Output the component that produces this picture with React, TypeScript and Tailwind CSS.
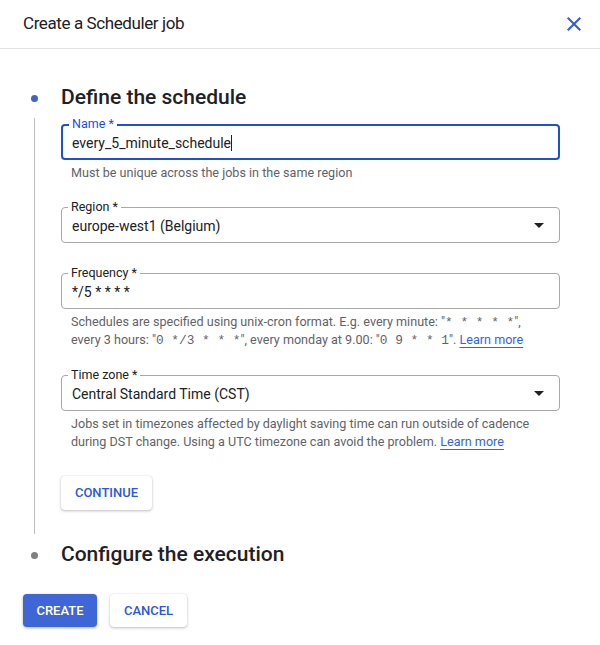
import type { ReactNode } from "react";

const font = { fontFamily: "Roboto, 'Liberation Sans', sans-serif" };

const Arrow = () => (
  <svg width="10" height="5" viewBox="0 0 10 5" className="shrink-0">
    <path d="M0 0h10L5 5z" fill="#202124" />
  </svg>
);

type FieldProps = {
  label: string;
  value: ReactNode;
  focused?: boolean;
  select?: boolean;
  helper?: ReactNode;
};

const Field = ({ label, value, focused, select, helper }: FieldProps) => (
  <div>
    <div
      className={
        focused
          ? "relative h-[36px] rounded-[4px] border-2 border-[#1f4fd6] flex items-center pl-[9px] pr-[14px]"
          : "relative h-[36px] rounded-[4px] border border-[#a8a8a8] flex items-center pl-[10px] pr-[15px]"
      }
    >
      <span
        className={
          focused
            ? "absolute -top-[9px] left-[6px] bg-white px-[3px] text-[12.5px] leading-[14px] text-[#1f4fd6]"
            : "absolute -top-[8px] left-[6px] bg-white px-[3px] text-[12.5px] leading-[14px] text-[#202124]"
        }
      >
        {label}
      </span>
      <div className="flex-1 pt-[3px] text-[14px] text-[#202124]">{value}</div>
      {select && <Arrow />}
    </div>
    {helper && (
      <div className="pl-[10px] pt-[4px] text-[12.6px] leading-[18px] text-[#5f6368]">{helper}</div>
    )}
  </div>
);

const Mono = ({ children }: { children: ReactNode }) => (
  <span className="text-[12.8px] leading-[1]" style={{ fontFamily: "'Liberation Mono', monospace" }}>
    {children}
  </span>
);

const LearnMore = () => (
  <span className="text-[#3367d6] underline decoration-[#3367d6] underline-offset-[3px]">Learn more</span>
);

export default function App() {
  return (
    <div className="w-[600px] h-[645px] bg-white" style={font}>
      <header className="h-[49px] border-b border-[#e3e3e3] flex items-center justify-between pl-[23px] pr-[14px]">
        <h1 className="text-[17px] tracking-[-0.4px] text-[#202124]">Create a Scheduler job</h1>
        <svg width="24" height="24" viewBox="0 0 24 24">
          <path
            d="M19 6.41L17.59 5 12 10.59 6.41 5 5 6.41 10.59 12 5 17.59 6.41 19 12 13.41 17.59 19 19 17.59 13.41 12z"
            fill="#2f5bd8"
          />
        </svg>
      </header>

      <section className="pt-[35px]">
        <div className="flex items-center h-[28px]">
          <div className="w-[61px] pl-[31px]">
            <div className="w-[7px] h-[7px] rounded-full bg-[#3b63d6]" />
          </div>
          <h2 className="text-[21px] font-medium text-[#202124]">Define the schedule</h2>
        </div>

        <div className="flex mt-[6px]">
          <div className="w-[61px] pl-[34px] shrink-0">
            <div className="w-px h-[416px] bg-[#bdbdbd]" />
          </div>
          <div className="w-[499px] pt-[6px]">
            <Field
              label="Name *"
              focused
              value={
                <span>
                  every_5_minute_schedule<span className="inline-block w-px h-[16px] bg-[#202124] align-[-3px]" />
                </span>
              }
              helper="Must be unique across the jobs in the same region"
            />
            <div className="mt-[25px]">
              <Field label="Region *" value="europe-west1 (Belgium)" select />
            </div>
            <div className="mt-[30px]">
              <Field
                label="Frequency *"
                value="*/5 * * * *"
                helper={
                  <>
                    Schedules are specified using unix-cron format. E.g. every minute: "<Mono>* * * * *</Mono>",
                    <br />
                    every 3 hours: "<Mono>0 */3 * * *</Mono>", every monday at 9.00: "<Mono>0 9 * * 1</Mono>".{" "}
                    <LearnMore />
                  </>
                }
              />
            </div>
            <div className="mt-[26px]">
              <Field
                label="Time zone *"
                value="Central Standard Time (CST)"
                select
                helper={
                  <>
                    Jobs set in timezones affected by daylight saving time can run outside of cadence
                    <br />
                    during DST change. Using a UTC timezone can avoid the problem. <LearnMore />
                  </>
                }
              />
            </div>
            <button className="mt-[25px] h-[34px] w-[91px] rounded-[4px] bg-white text-[13px] font-medium text-[#2c58d6] shadow-[0_1px_3px_rgba(0,0,0,0.25),0_0_1px_rgba(0,0,0,0.15)]">
              CONTINUE
            </button>
          </div>
        </div>

        <div className="flex items-center h-[28px] mt-[7px]">
          <div className="w-[61px] pl-[31px]">
            <div className="w-[7px] h-[7px] rounded-full bg-[#808080]" />
          </div>
          <h2 className="text-[21px] font-medium text-[#202124]">Configure the execution</h2>
        </div>
      </section>

      <div className="flex gap-[13px] pl-[23px] mt-[25px]">
        <button className="h-[33px] w-[74px] rounded-[4px] bg-[#3f66d6] text-[13px] font-medium text-white shadow-[0_1px_3px_rgba(0,0,0,0.3)]">
          CREATE
        </button>
        <button className="h-[33px] w-[77px] rounded-[4px] bg-white text-[13px] font-medium text-[#2c58d6] shadow-[0_1px_3px_rgba(0,0,0,0.25),0_0_1px_rgba(0,0,0,0.15)]">
          CANCEL
        </button>
      </div>
    </div>
  );
}
